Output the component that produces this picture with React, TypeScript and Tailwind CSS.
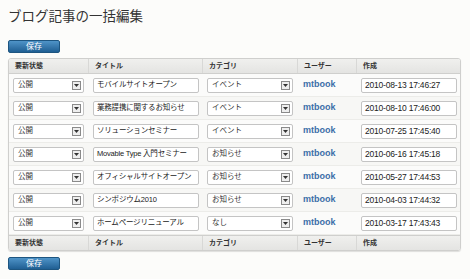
import React from 'react';

type Entry = {
    status: string;
    title: string;
    category: string;
    user: string;
    created: string;
};

const entries: Entry[] = [
    { status: '公開', title: 'モバイルサイトオープン', category: 'イベント', user: 'mtbook', created: '2010-08-13 17:46:27' },
    { status: '公開', title: '業務提携に関するお知らせ', category: 'イベント', user: 'mtbook', created: '2010-08-10 17:46:00' },
    { status: '公開', title: 'ソリューションセミナー', category: 'イベント', user: 'mtbook', created: '2010-07-25 17:45:40' },
    { status: '公開', title: 'Movable Type 入門セミナー', category: 'お知らせ', user: 'mtbook', created: '2010-06-16 17:45:18' },
    { status: '公開', title: 'オフィシャルサイトオープン', category: 'お知らせ', user: 'mtbook', created: '2010-05-27 17:44:53' },
    { status: '公開', title: 'シンポジウム2010', category: 'お知らせ', user: 'mtbook', created: '2010-04-03 17:44:32' },
    { status: '公開', title: 'ホームページリニューアル', category: 'なし', user: 'mtbook', created: '2010-03-17 17:43:43' },
];

const cols = 'grid grid-cols-[80px_114px_95px_59px_105px]';

const SaveButton = () => (
    <button className="w-[52px] h-[13px] rounded-[2px] border border-[#1d5580] bg-gradient-to-b from-[#4f94c8] to-[#1f5f93] text-white text-[8px] leading-[11px] flex items-center justify-center">
        保存
    </button>
);

const FakeSelect = ({ value, width }: { value: string; width: string }) => (
    <div className={`${width} h-[15px] bg-white border border-[#c4c4c4] rounded-[2px] flex items-center justify-between pl-[4px] pr-[2px]`}>
        <span className="text-[7.5px] text-[#333] leading-none">{value}</span>
        <span className="w-[9px] h-[9px] border border-[#8a8a8a] bg-[#eeeeee] flex items-center justify-center">
            <svg width="5" height="3" viewBox="0 0 5 3">
                <path d="M0 0h5L2.5 3z" fill="#333" />
            </svg>
        </span>
    </div>
);

const FakeInput = ({ value, width, small }: { value: string; width: string; small?: boolean }) => (
    <div className={`${width} h-[15px] bg-white border border-[#c4c4c4] rounded-[2px] flex items-center px-[3px]`}>
        <span className={`${small ? 'text-[7.5px] tracking-[-0.2px]' : 'text-[8.5px] tracking-[-0.2px]'} text-[#222] leading-none whitespace-nowrap`}>{value}</span>
    </div>
);

const HeaderRow = ({ top }: { top?: boolean }) => (
    <div className={`${cols} h-[15px] bg-gradient-to-b from-[#f0f0ee] to-[#e4e4e2] ${top ? 'border-b' : 'border-t'} border-[#cfcfcd] text-[7px] font-bold text-[#333]`}>
        <div className="pl-[6px] flex items-center border-r border-[#d8d8d6]">要新状態</div>
        <div className="pl-[6px] flex items-center border-r border-[#d8d8d6]">タイトル</div>
        <div className="pl-[6px] flex items-center border-r border-[#d8d8d6]">カテゴリ</div>
        <div className="pl-[6px] flex items-center border-r border-[#d8d8d6]">ユーザー</div>
        <div className="pl-[6px] flex items-center">作成</div>
    </div>
);

export default function App() {
    return (
        <div className="w-[470px] h-[279px] bg-[#fcfcfa] px-[8px] pt-[6px] font-['Liberation_Sans','Noto_Sans_CJK_JP',sans-serif]">
            <h1 className="text-[13.5px] leading-[22px] text-[#333] font-normal">ブログ記事の一括編集</h1>

            <div className="mt-[12px]">
                <SaveButton />
            </div>

            {/* Entries table */}
            <div className="mt-[5px] w-[453px] border border-[#cfcfcd] rounded-[3px] overflow-hidden shadow-[0_1px_1px_rgba(0,0,0,0.12)]">
                <HeaderRow top />
                {entries.map((entry, i) => (
                    <div key={i} className={`${cols} h-[23px] ${i % 2 === 0 ? 'bg-[#fbfbfa]' : 'bg-[#f7f7f5]'} border-b border-[#ecece9] last:border-b-0`}>
                        <div className="flex items-center pl-[4px]">
                            <FakeSelect value={entry.status} width="w-[71px]" />
                        </div>
                        <div className="flex items-center pl-[4px]">
                            <FakeInput value={entry.title} width="w-[106px]" small />
                        </div>
                        <div className="flex items-center pl-[4px]">
                            <FakeSelect value={entry.category} width="w-[86px]" />
                        </div>
                        <div className="flex items-center pl-[5px] text-[9px] font-bold text-[#3b6ea8]">
                            {entry.user}
                        </div>
                        <div className="flex items-center pl-[4px]">
                            <FakeInput value={entry.created} width="w-[96px]" />
                        </div>
                    </div>
                ))}
                <HeaderRow />
            </div>

            <div className="mt-[6px]">
                <SaveButton />
            </div>
        </div>
    );
}
